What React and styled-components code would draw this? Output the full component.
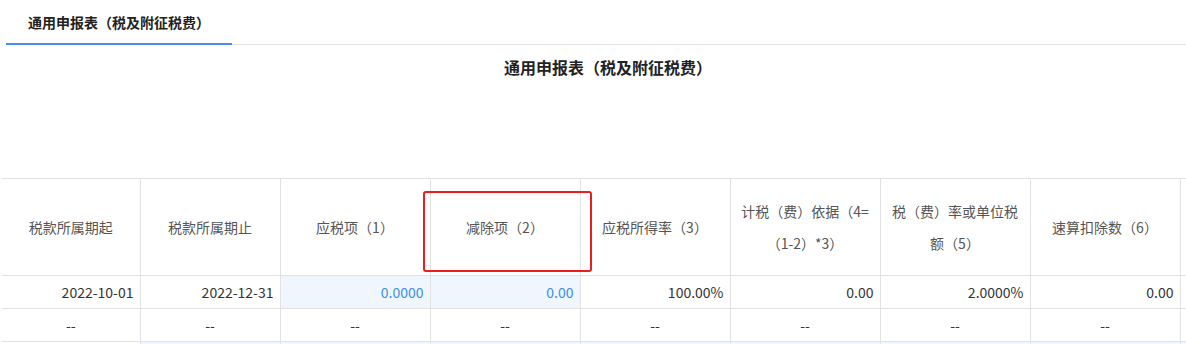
import styled, { createGlobalStyle } from "styled-components";

const GlobalStyle = createGlobalStyle`
    body {
        margin: 0;
        background: #fff;
        font-family: "Noto Sans CJK SC", "Noto Sans", sans-serif;
        overflow: hidden;
    }
`

const Page = styled.div`
    width: 1186px;
    height: 344px;
    overflow: hidden;
`

const TabBar = styled.div`
    display: flex;
    height: 44px;
    margin-left: 6px;
    border-bottom: 1px solid #e4e4e4;
`

const Tab = styled.div`
    display: flex;
    align-items: center;
    padding: 0 22px;
    height: 43px;
    margin-bottom: -1px;
    font-size: 14px;
    font-weight: 600;
    color: #222;
    border-bottom: 2px solid ${p => (p.$active ? "#4a8cf0" : "transparent")};
`

const Title = styled.h2`
    margin: 0;
    padding: 12px 0 0 30px;
    height: 133px;
    box-sizing: border-box;
    text-align: center;
    font-size: 16px;
    line-height: 20px;
    font-weight: 600;
    color: #222;
`

const TableWrap = styled.div`
    position: relative;
    padding-left: 2px;
    overflow: hidden;
`

const Table = styled.table`
    border-collapse: collapse;
    table-layout: fixed;
    width: 1334px;
`

const Th = styled.th`
    height: 96px;
    padding: 0 10px;
    border: 1px solid #e2e2e2;
    border-left: ${p => (p.$first ? "none" : "1px solid #e2e2e2")};
    font-size: 14px;
    font-weight: 400;
    line-height: 32px;
    color: #555;
    text-align: center;
    vertical-align: middle;
`

const Td = styled.td`
    height: 32px;
    padding: 0 6px;
    border: 1px solid #e2e2e2;
    border-left: ${p => (p.$first ? "none" : "1px solid #e2e2e2")};
    font-size: 14px;
    color: ${p => (p.$blue ? "#3b8fe3" : "#333")};
    background: ${p => (p.$tint ? "#eff6fe" : "#fff")};
    text-align: ${p => (p.$center ? "center" : "right")};
    white-space: nowrap;
`

const Highlight = styled.div`
    position: absolute;
    left: 423px;
    top: 13px;
    width: 169px;
    height: 81px;
    box-sizing: border-box;
    border: 2px solid #ee1c1c;
    border-radius: 3px;
    pointer-events: none;
`

const columns = [
    { title: "税款所属期起", width: 138 },
    { title: "税款所属期止", width: 140 },
    { title: "应税项（1）", width: 150 },
    { title: "减除项（2）", width: 150 },
    { title: "应税所得率（3）", width: 150 },
    { title: "计税（费）依据（4=（1-2）*3）", width: 150 },
    { title: "税（费）率或单位税额（5）", width: 150 },
    { title: "速算扣除数（6）", width: 150 },
    { title: "", width: 156 },
]

const dataRow = [
    { v: "2022-10-01" },
    { v: "2022-12-31" },
    { v: "0.0000", blue: true, tint: true },
    { v: "0.00", blue: true, tint: true },
    { v: "100.00%" },
    { v: "0.00" },
    { v: "2.0000%" },
    { v: "0.00" },
    { v: "" },
]

const App = () => {
    return (
        <Page>
            <GlobalStyle />
            <TabBar>
                <Tab $active>通用申报表（税及附征税费）</Tab>
            </TabBar>
            <Title>通用申报表（税及附征税费）</Title>
            <TableWrap>
                <Table>
                    <colgroup>
                        {columns.map((c, i) => <col key={i} style={{ width: c.width }} />)}
                    </colgroup>
                    <thead>
                        <tr>
                            {columns.map((c, i) => <Th key={i} $first={i === 0}>{c.title}</Th>)}
                        </tr>
                    </thead>
                    <tbody>
                        <tr>
                            {dataRow.map((d, i) => (
                                <Td key={i} $first={i === 0} $blue={d.blue} $tint={d.tint}>{d.v}</Td>
                            ))}
                        </tr>
                        <tr>
                            {columns.map((c, i) => (
                                <Td key={i} $first={i === 0} $center>{i < 8 ? "--" : ""}</Td>
                            ))}
                        </tr>
                        <tr>
                            {columns.map((c, i) => (
                                <Td key={i} $first={i === 0} $tint={i > 0}></Td>
                            ))}
                        </tr>
                    </tbody>
                </Table>
                <Highlight />
            </TableWrap>
        </Page>
    )
}

export default App
